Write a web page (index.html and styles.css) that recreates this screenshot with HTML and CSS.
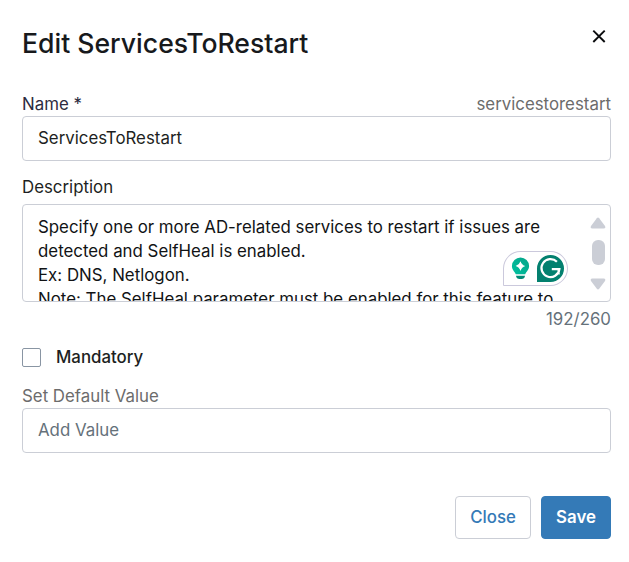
FILE: index.html
```html
<!DOCTYPE html>
<html lang="en">
<head>
<meta charset="utf-8">
<title>Edit ServicesToRestart</title>
<link rel="stylesheet" href="styles.css">
</head>
<body>
<main class="dialog">
  <header class="dialog-header">
    <h1 class="title">Edit ServicesToRestart</h1>
    <svg class="dismiss" width="14" height="14" viewBox="0 0 14 14"><path d="M1.3 1.6 12.7 13M12.7 1.6 1.3 13"/></svg>
  </header>

  <div class="label-row"><span class="label label-name">Name *</span><span class="label slug">servicestorestart</span></div>
  <div class="field"><span class="value">ServicesToRestart</span></div>

  <div class="label-row description-row"><span class="label label-description">Description</span></div>
  <div class="textarea">
    <div class="description">Specify one or more AD-related services to restart if issues are<br>detected and SelfHeal is enabled.<br>Ex: DNS, Netlogon.<br>Note: The SelfHeal parameter must be enabled for this feature to</div>
    <div class="scrollbar">
      <svg width="16" height="12" viewBox="0 0 16 12"><path d="M6.8 1.2Q8 0 9.2 1.2L15 9Q16 11.5 13.8 11.5H2.2Q0 11.5 1 9Z"/></svg>
      <div class="thumb"></div>
      <svg width="16" height="12" viewBox="0 0 16 12"><path d="M6.8 10.8Q8 12 9.2 10.8L15 3Q16 .5 13.8 .5H2.2Q0 .5 1 3Z"/></svg>
    </div>
    <div class="assistant">
      <svg width="19" height="23" viewBox="0 0 19 23">
        <defs><linearGradient id="bulb" x1="1" y1="0" x2="0" y2="1"><stop offset="0" stop-color="#06a288"/><stop offset="1" stop-color="#00c2a0"/></linearGradient></defs>
        <path fill="url(#bulb)" d="M9.5 .5A8.6 8.6 0 0 0 .9 9.1C.9 13 3.6 14.6 4.8 17.3H14.2C15.4 14.6 18.1 13 18.1 9.1A8.6 8.6 0 0 0 9.5 .5Z"/>
        <path fill="#fff" d="M9.5 4.2Q10.7 7.9 14.4 9.1Q10.7 10.3 9.5 14Q8.3 10.3 4.6 9.1Q8.3 7.9 9.5 4.2Z"/>
        <path fill="#028b76" d="M5 18.7H14Q13.5 22 10.5 22H8.5Q5.5 22 5 18.7Z"/>
      </svg>
      <svg width="27" height="27" viewBox="0 0 27 27">
        <path fill="#03806f" d="M13.5 0A13.5 13.5 0 0 1 27 13.5A13.5 13.5 0 0 1 13.5 27H0V13.5A13.5 13.5 0 0 1 13.5 0Z"/>
        <path fill="none" stroke="#fff" stroke-width="2.2" d="M19.9 6.8A9 9 0 1 0 22.4 14.2H14.8M18.6 14.2H21.6V19.4"/>
      </svg>
    </div>
  </div>
  <div class="counter">192/260</div>

  <div class="check-row"><span class="checkbox"></span><span class="mandatory">Mandatory</span></div>

  <div class="label-row default-row"><span class="label label-default">Set Default Value</span></div>
  <div class="field"><span class="value placeholder">Add Value</span></div>

  <footer class="actions">
    <button class="button close">Close</button>
    <button class="button save">Save</button>
  </footer>
</main>
</body>
</html>
```
FILE: styles.css
```css
* { box-sizing: border-box; }
body {
  margin: 0;
  background: #fff;
  color: #1d1f22;
  font: 16.85px/24px Inter, "Liberation Sans", sans-serif;
}
.dialog {
  display: flex;
  flex-direction: column;
  height: 562px;
  padding: 27px 18px 0 22px;
}
.dialog-header {
  display: flex;
  justify-content: space-between;
  align-items: flex-start;
  height: 65px;
  padding-right: 5px;
}
.title {
  margin: 0;
  color: #17191c;
  font-size: 26.6px;
  line-height: 32px;
  font-weight: 500;
}
.dismiss {
  margin-top: 2px;
  fill: none;
  stroke: #0b0c0e;
  stroke-width: 1.9;
}
.label-row {
  display: flex;
  justify-content: space-between;
  height: 24px;
}
.label-name { color: #2c2b40; }
.slug, .label-default { color: #6c6c6c; }
.field {
  display: flex;
  align-items: center;
  height: 45px;
  padding: 0 15px 2px;
  border: 1px solid #cbced6;
  border-radius: 4px;
}
.placeholder { color: #65717a; }
.description-row { margin-top: 14px; height: 29px; }
.textarea {
  position: relative;
  display: flex;
  justify-content: space-between;
  height: 98px;
  padding: 10px 4px 0 15px;
  overflow: hidden;
  border: 1px solid #cbced6;
  border-radius: 4px;
}
.description {
  white-space: nowrap;
  color: #111315;
}
.scrollbar {
  display: flex;
  flex-direction: column;
  justify-content: space-between;
  align-items: center;
  height: 73px;
  margin-top: 2px;
  fill: #cbced6;
}
.thumb {
  width: 13px;
  height: 25px;
  margin-top: -3px;
  border-radius: 6px;
  background: #cbced6;
}
.assistant {
  position: absolute;
  left: 480px;
  top: 46px;
  display: flex;
  align-items: center;
  gap: 7px;
  width: 65px;
  height: 35px;
  padding-left: 7px;
  border: 1px solid #cbc9dc;
  border-radius: 18px 18px 18px 1px;
  background: #fff;
}
.counter {
  margin-top: 5px;
  text-align: right;
  color: #65717a;
}
.check-row {
  display: flex;
  align-items: center;
  gap: 15px;
  height: 24px;
  margin-top: 14px;
}
.checkbox {
  width: 19px;
  height: 19px;
  border: 1px solid #8995a3;
  border-radius: 2px;
}
.mandatory { font-weight: 500; }
.default-row { margin-top: 15px; }
.actions {
  display: flex;
  justify-content: flex-end;
  gap: 10px;
  margin-top: 43px;
}
.button {
  height: 43px;
  padding: 0 0 2px;
  border: 1px solid #cbced6;
  border-radius: 4px;
  background: #fff;
  color: #347ab7;
  font: 500 16.85px/24px Inter, "Liberation Sans", sans-serif;
}
.close { width: 76px; }
.save {
  width: 70px;
  border-color: #347ab7;
  background: #347ab7;
  color: #fff;
  font-weight: 600;
}
```
